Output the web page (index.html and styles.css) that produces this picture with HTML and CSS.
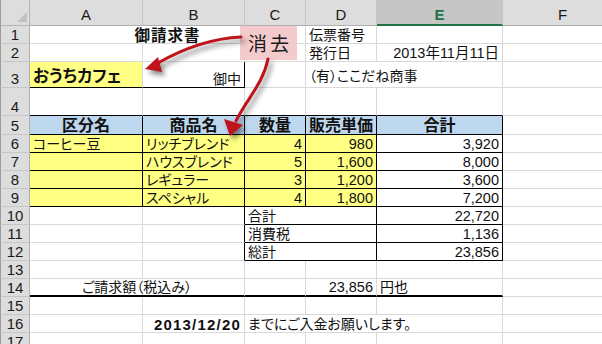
FILE: index.html
```html
<!DOCTYPE html>
<html lang="ja">
<head>
<meta charset="utf-8">
<title>御請求書</title>
<link rel="stylesheet" href="styles.css">
</head>
<body>
<div class="wrap">
  <div class="sheet">
    <!-- header row -->
    <div class="corner"><svg width="29" height="25" viewBox="0 0 29 25"><polygon points="16,22 26,22 26,12" fill="#c2c2c2"/></svg></div>
    <div class="ch">A</div>
    <div class="ch">B</div>
    <div class="ch">C</div>
    <div class="ch">D</div>
    <div class="ch sel">E</div>
    <div class="ch">F</div>

    <!-- row 1 -->
    <div class="rh">1</div>
    <div class="c span3 center bold title">御請求書</div>
    <div class="c">伝票番号</div>
    <div class="c"></div>
    <div class="c"></div>

    <!-- row 2 -->
    <div class="rh">2</div>
    <div class="c"></div>
    <div class="c"></div>
    <div class="c"></div>
    <div class="c">発行日</div>
    <div class="c right num">2013年11月11日</div>
    <div class="c"></div>

    <!-- row 3 -->
    <div class="rh">3</div>
    <div class="c yellow bold big pb3 bb">おうちカフェ</div>
    <div class="c right bb br">御中</div>
    <div class="c"></div>
    <div class="c span2 pb3">（有）ここだね商事</div>
    <div class="c"></div>

    <!-- row 4 -->
    <div class="rh">4</div>
    <div class="c bb"></div>
    <div class="c bb"></div>
    <div class="c bb"></div>
    <div class="c bb"></div>
    <div class="c bb"></div>
    <div class="c"></div>

    <!-- row 5 -->
    <div class="rh">5</div>
    <div class="c blue head bb br">区分名</div>
    <div class="c blue head bb br">商品名</div>
    <div class="c blue head bb br">数量</div>
    <div class="c blue head bb br">販売単価</div>
    <div class="c blue head bb br">合計</div>
    <div class="c"></div>

    <!-- row 6 -->
    <div class="rh">6</div>
    <div class="c yellow bb br">コーヒー豆</div>
    <div class="c yellow bb br">リッチブレンド</div>
    <div class="c yellow bb br right num">4</div>
    <div class="c yellow bb br right num">980</div>
    <div class="c bb br right num">3,920</div>
    <div class="c"></div>

    <!-- row 7 -->
    <div class="rh">7</div>
    <div class="c yellow bb br"></div>
    <div class="c yellow bb br">ハウスブレンド</div>
    <div class="c yellow bb br right num">5</div>
    <div class="c yellow bb br right num">1,600</div>
    <div class="c bb br right num">8,000</div>
    <div class="c"></div>

    <!-- row 8 -->
    <div class="rh">8</div>
    <div class="c yellow bb br"></div>
    <div class="c yellow bb br">レギュラー</div>
    <div class="c yellow bb br right num">3</div>
    <div class="c yellow bb br right num">1,200</div>
    <div class="c bb br right num">3,600</div>
    <div class="c"></div>

    <!-- row 9 -->
    <div class="rh">9</div>
    <div class="c yellow bb br"></div>
    <div class="c yellow bb br">スペシャル</div>
    <div class="c yellow bb br right num">4</div>
    <div class="c yellow bb br right num">1,800</div>
    <div class="c bb br right num">7,200</div>
    <div class="c"></div>

    <!-- row 10 -->
    <div class="rh">10</div>
    <div class="c"></div>
    <div class="c br"></div>
    <div class="c span2 bb br">合計</div>
    <div class="c bb br right num">22,720</div>
    <div class="c"></div>

    <!-- row 11 -->
    <div class="rh">11</div>
    <div class="c"></div>
    <div class="c br"></div>
    <div class="c span2 bb br">消費税</div>
    <div class="c bb br right num">1,136</div>
    <div class="c"></div>

    <!-- row 12 -->
    <div class="rh">12</div>
    <div class="c"></div>
    <div class="c br"></div>
    <div class="c span2 bb br">総計</div>
    <div class="c bb br right num">23,856</div>
    <div class="c"></div>

    <!-- row 13 -->
    <div class="rh">13</div>
    <div class="c"></div>
    <div class="c"></div>
    <div class="c"></div>
    <div class="c"></div>
    <div class="c"></div>
    <div class="c"></div>

    <!-- row 14 -->
    <div class="rh">14</div>
    <div class="c span2 center thick">ご請求額（税込み）</div>
    <div class="c thick"></div>
    <div class="c thick right num">23,856</div>
    <div class="c thick">円也</div>
    <div class="c"></div>

    <!-- row 15 -->
    <div class="rh">15</div>
    <div class="c"></div>
    <div class="c"></div>
    <div class="c"></div>
    <div class="c"></div>
    <div class="c"></div>
    <div class="c"></div>

    <!-- row 16 -->
    <div class="rh">16</div>
    <div class="c"></div>
    <div class="c right bold date">2013/12/20</div>
    <div class="c span3">までにご入金お願いします。</div>
    <div class="c"></div>

    <!-- row 17 -->
    <div class="rh">17</div>
    <div class="c"></div>
    <div class="c"></div>
    <div class="c"></div>
    <div class="c"></div>
    <div class="c"></div>
    <div class="c"></div>
  </div>

  <div class="callout">消去</div>

  <svg class="arrows" width="602" height="344" viewBox="0 0 602 344">
    <g fill="none" stroke="#c0141c" stroke-width="3" stroke-linecap="round">
      <path d="M 241 37 Q 200 39 158 63"/>
      <path d="M 268 59 C 263 84 246 100 236 121"/>
    </g>
    <g fill="#c0141c">
      <polygon points="145,69 158,57 162,72"/>
      <polygon points="230,136 224,119 243,125"/>
    </g>
  </svg>
</div>
</body>
</html>
```

FILE: styles.css
```css
html, body {
  margin: 0;
  padding: 0;
  background: #ffffff;
  overflow: hidden;
}

body {
  width: 602px;
  height: 344px;
  font-family: "Liberation Sans", "Noto Sans CJK JP", sans-serif;
  font-size: 14px;
  color: #111111;
}

.wrap {
  position: relative;
  width: 602px;
  height: 344px;
  overflow: hidden;
}

.sheet {
  display: grid;
  grid-template-columns: 30px 113px 102px 61px 71px 126px 120px;
  grid-template-rows: 26px 18px 18px 26px 28px 19px repeat(12, 18px);
  width: 623px;
}

.sheet > div {
  box-sizing: border-box;
  min-width: 0;
}

.corner {
  background: #dddddd;
  border-right: 1px solid #b5b5b5;
  border-bottom: 1px solid #b5b5b5;
  border-left: 1px solid #9c9c9c;
}

.corner svg {
  display: block;
}

.ch {
  background: #dddddd;
  border-right: 1px solid #c6c6c6;
  border-bottom: 1px solid #b0b0b0;
  display: flex;
  align-items: flex-end;
  justify-content: center;
  padding-bottom: 2px;
  font-size: 15px;
  line-height: 16px;
  color: #1a1a1a;
}

.ch.sel {
  background: #c6c6c6;
  border-bottom: 2px solid #217346;
  padding-bottom: 1px;
  color: #217346;
  font-weight: bold;
}

.rh {
  background: #dddddd;
  border-right: 1px solid #b0b0b0;
  border-bottom: 1px solid #c6c6c6;
  border-left: 1px solid #9c9c9c;
  display: flex;
  align-items: flex-end;
  justify-content: center;
  font-size: 15px;
  line-height: 16px;
  padding-bottom: 0;
  color: #1a1a1a;
}

.c {
  border-right: 1px solid #d9d9d9;
  border-bottom: 1px solid #d9d9d9;
  display: flex;
  align-items: flex-end;
  justify-content: flex-start;
  padding: 0 3px 0 3px;
  line-height: 15px;
  white-space: nowrap;
  font-feature-settings: "palt";
}

.num { font-size: 14.5px; }

.span2 { grid-column: span 2; }
.span3 { grid-column: span 3; }

.center { justify-content: center; }
.right { justify-content: flex-end; }
.bold { font-weight: bold; }

.title { font-size: 15.5px; letter-spacing: 1px; }
.big { font-size: 16.5px; }
.pb3 { padding-bottom: 3px; }
.date { font-size: 15px; letter-spacing: 1.2px; }

.yellow { background: #ffff84; }
.blue { background: #bdd7ee; }

.head {
  justify-content: center;
  font-weight: bold;
  font-size: 16px;
  padding-bottom: 1px;
}

.bb { border-bottom: 1px solid #000000; }
.br { border-right: 1px solid #000000; }
.thick { border-bottom: 2px solid #000000; }

.callout {
  position: absolute;
  left: 240px;
  top: 26px;
  width: 57px;
  height: 34px;
  box-sizing: border-box;
  background: #f4cbcd;
  font-family: "Noto Sans CJK JP", sans-serif;
  font-size: 19px;
  letter-spacing: 3px;
  color: #1a1a1a;
  display: flex;
  align-items: center;
  justify-content: center;
  padding-left: 3px;
  padding-bottom: 1px;
}

.arrows {
  position: absolute;
  left: 0;
  top: 0;
  pointer-events: none;
  filter: drop-shadow(3px 4px 2.5px rgba(0, 0, 0, 0.45));
}
```
